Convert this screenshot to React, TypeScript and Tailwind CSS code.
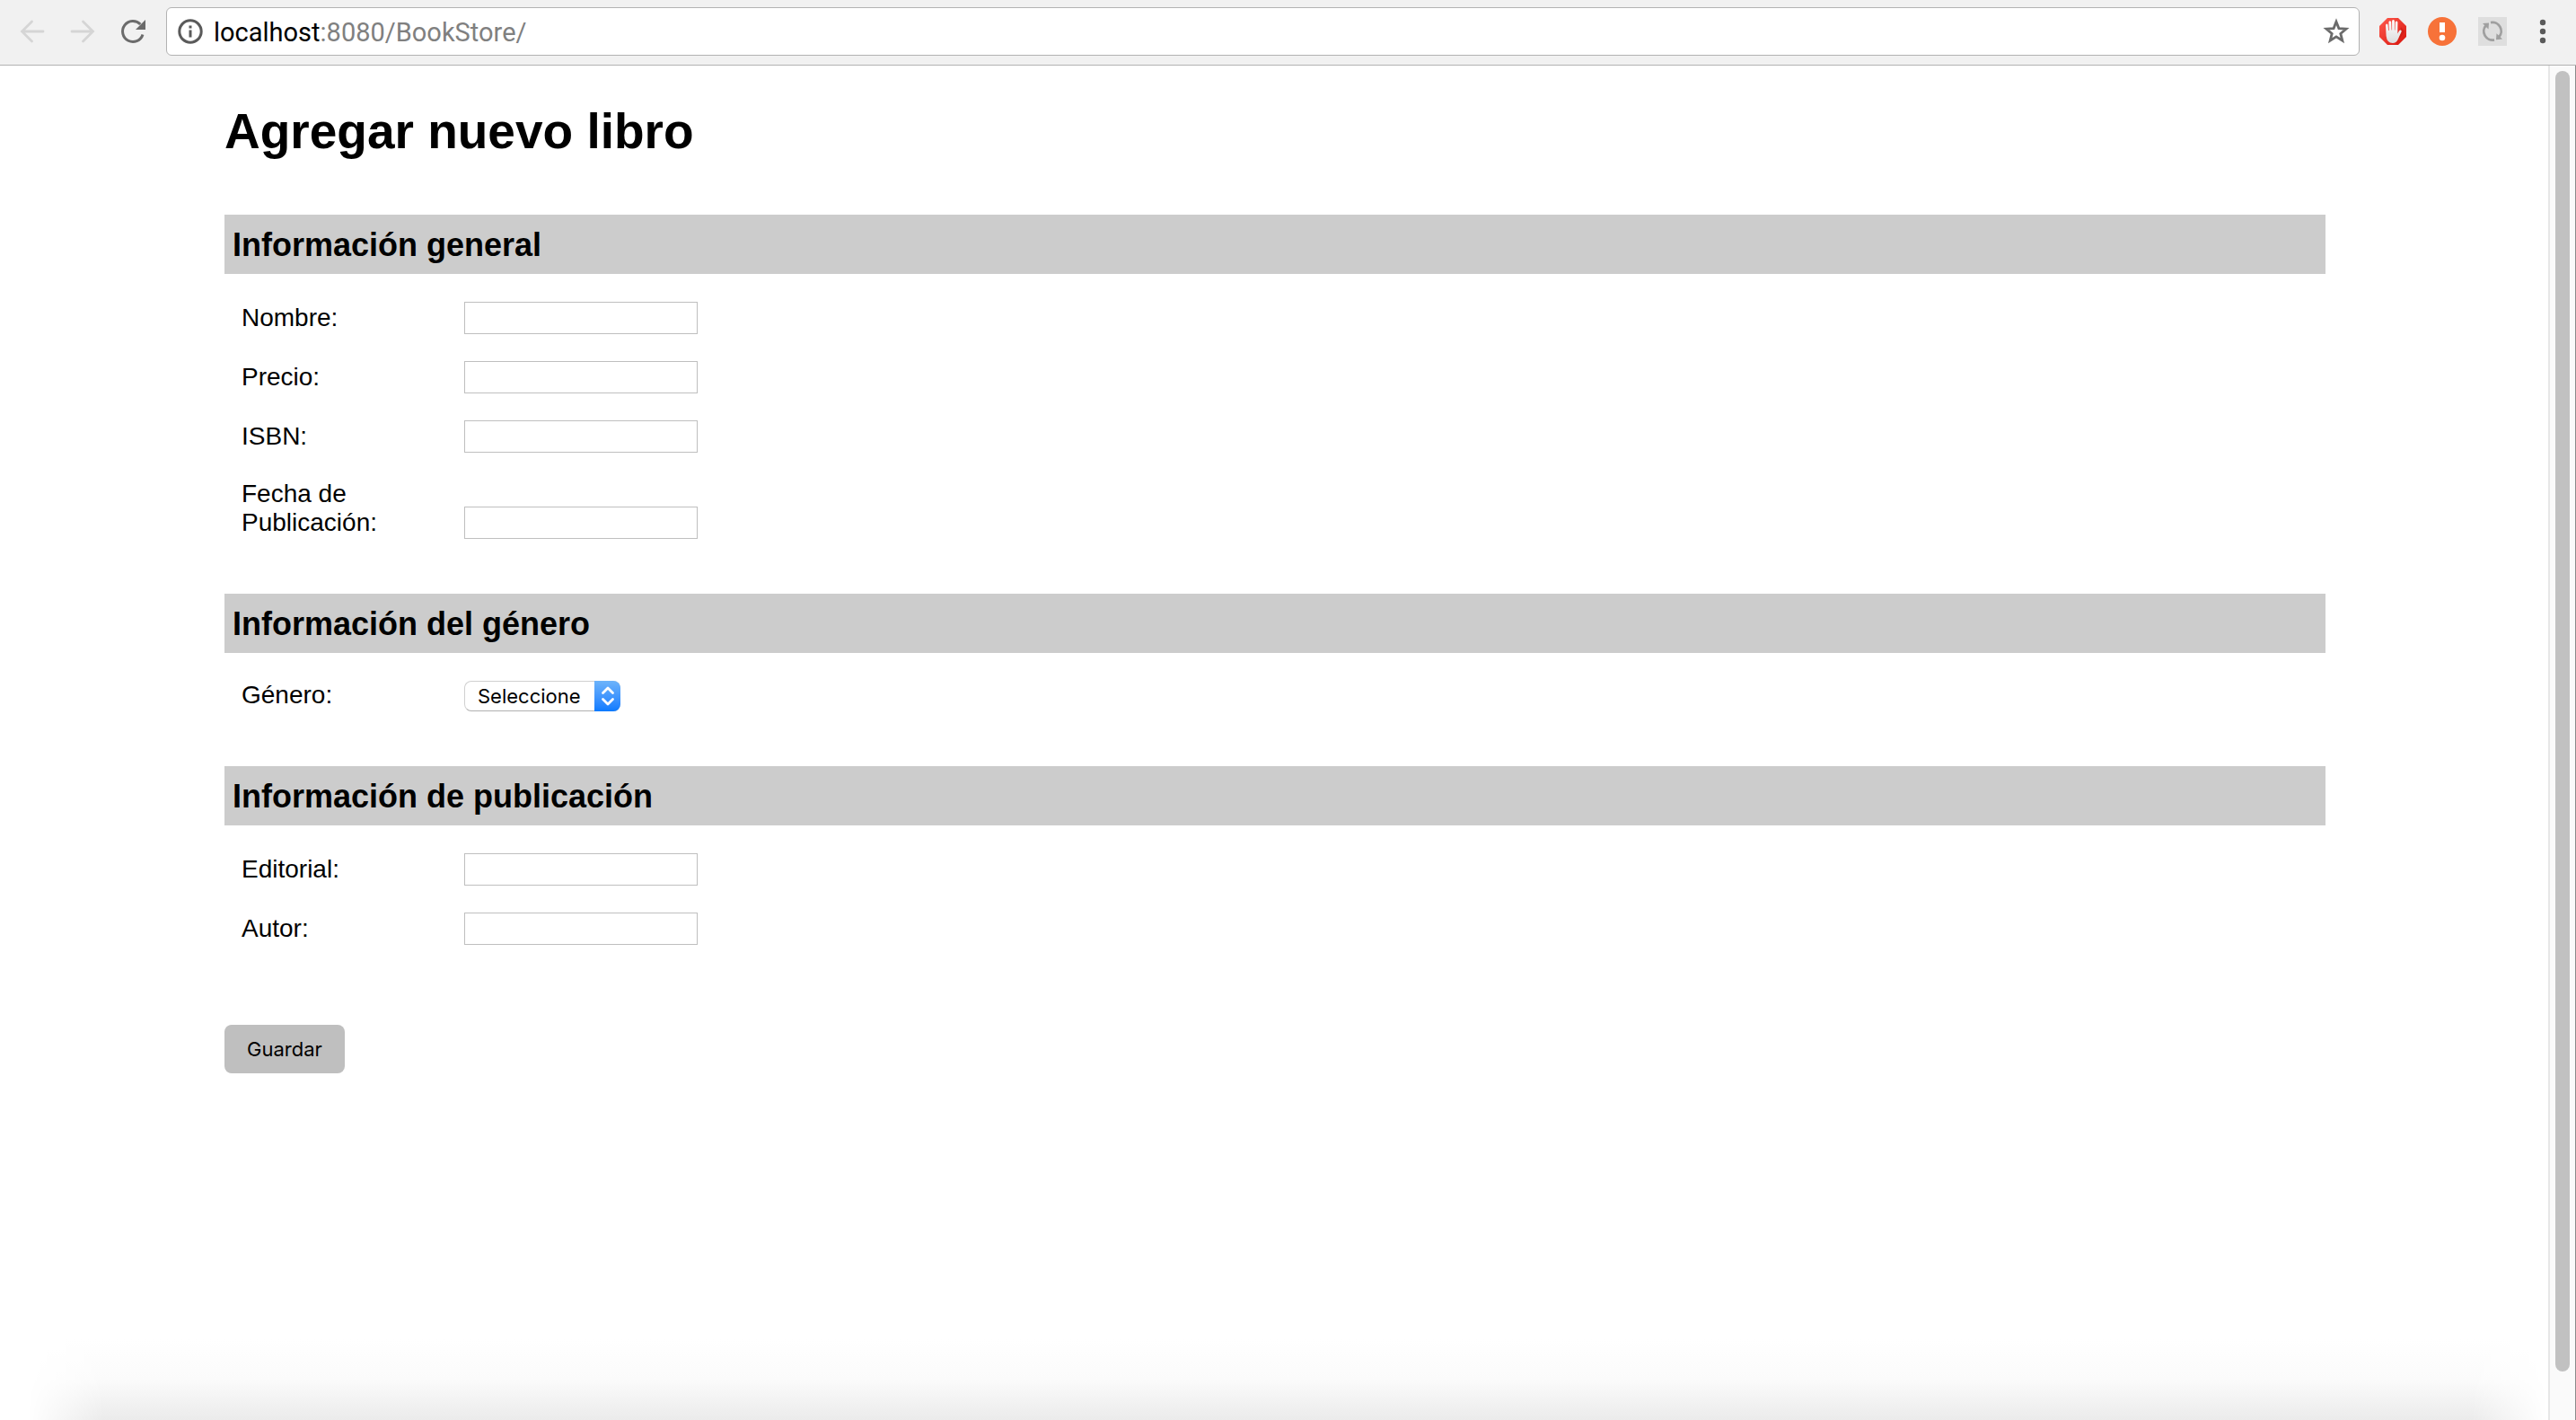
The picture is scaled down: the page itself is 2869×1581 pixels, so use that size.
import type { ReactNode } from "react";

const sans = "font-['Liberation_Sans',Arial,sans-serif]";

function ArrowIcon({ flip = false }: { flip?: boolean }) {
  return (
    <svg width="32" height="32" viewBox="0 0 32 32" fill="none" stroke="#d5d5d5" strokeWidth="2.8" strokeLinecap="round" className={flip ? "rotate-180" : ""}>
      <path d="M28 16H4.500M15.500 5L4.500 16L15.500 27" />
    </svg>
  );
}

function ReloadIcon() {
  return (
    <svg width="32" height="32" viewBox="0 0 32 32" fill="none">
      <path d="M27 19.500A11.500 11.500 0 1 1 24.300 8" stroke="#6b6b6b" strokeWidth="3" />
      <path d="M30 3V14H19Z" fill="#6b6b6b" />
    </svg>
  );
}

function InfoIcon() {
  return (
    <svg width="28" height="28" viewBox="0 0 28 28" fill="none" className="shrink-0">
      <circle cx="14" cy="14" r="12.200" stroke="#5a5a5a" strokeWidth="3" />
      <path d="M12.500 12.500h3v8h-3zM12.500 7.500h3v3h-3z" fill="#5a5a5a" />
    </svg>
  );
}

function StarIcon() {
  return (
    <svg width="30" height="30" viewBox="0 0 30 30" fill="none">
      <path d="M15 4.200L17.900 11.600L26 12.200L19.800 17.400L21.800 25.200L15 20.900L8.200 25.200L10.200 17.400L4 12.200L12.100 11.600Z" stroke="#6b6b6b" strokeWidth="2.800" />
    </svg>
  );
}

function BlockIcon() {
  return (
    <svg width="30" height="30" viewBox="0 0 30 30">
      <defs>
        <linearGradient id="red" x1="0" y1="0" x2="1" y2="1">
          <stop offset="0" stopColor="#ff5a4e" />
          <stop offset="1" stopColor="#d8140c" />
        </linearGradient>
        <linearGradient id="hand" x1="0" y1="0" x2="0" y2="1">
          <stop offset="0" stopColor="#ffffff" />
          <stop offset="1" stopColor="#dcdcdc" />
        </linearGradient>
      </defs>
      <path d="M9 0H21L30 9V21L21 30H9L0 21V9Z" fill="url(#red)" />
      <path d="M15 28L20 27L28 15L24 10L21 27Z" fill="#b30f0a" opacity=".35" />
      <path d="M7 8.200Q7 6.600 8.300 6.600T9.600 8.200L10.200 14H10.800L10.400 4.800Q10.400 3.200 11.800 3.200T13.200 4.800L13.600 13.500H14.100V3.600Q14.100 2 15.500 2T16.900 3.600V13.500H17.400L17.700 5Q17.800 3.500 19.100 3.500T20.400 5L20.300 17.500L22 14.500Q23 13 24.200 13.700Q25 14.300 24.500 15.500L20.600 24Q18.800 28 14.800 28Q8.500 28 7.600 20Z" fill="url(#hand)" />
    </svg>
  );
}

function AlertIcon() {
  return (
    <svg width="32" height="32" viewBox="0 0 32 32">
      <circle cx="16" cy="16" r="16" fill="#f77239" />
      <path d="M13 6h6v11h-6z" fill="#fff" />
      <circle cx="16" cy="23" r="3.300" fill="#fff" />
    </svg>
  );
}

function SyncIcon() {
  return (
    <svg width="32" height="32" viewBox="0 0 32 32" fill="none">
      <path d="M0 0H32V32H0Z" fill="#dedede" />
      <path d="M14 6.200A9.700 9.700 0 0 1 23.200 22.200M18 25.300A9.700 9.700 0 0 1 8.800 9.300" stroke="#9f9f9f" strokeWidth="2.800" />
      <path d="M5 7L12 6.500L11.500 13.500ZM27 24.500L20 25.300L20.500 18.200Z" fill="#9f9f9f" />
    </svg>
  );
}

function MenuIcon() {
  return (
    <svg width="8" height="28" viewBox="0 0 8 28" fill="#5a5a5a">
      <circle cx="4" cy="4" r="3.200" />
      <circle cx="4" cy="14" r="3.200" />
      <circle cx="4" cy="24" r="3.200" />
    </svg>
  );
}

function IconButton({ label, children }: { label: string; children: ReactNode }) {
  return (
    <button type="button" aria-label={label} className="flex shrink-0 items-center justify-center">
      {children}
    </button>
  );
}

function Toolbar() {
  return (
    <header className="flex h-[73px] shrink-0 items-start border-b border-[#b2b2b2] bg-[#f1f1f1] pt-2 pr-[33px] pl-5">
      <nav className="flex h-[54px] items-center gap-6 pr-[21px]">
        <IconButton label="Atrás"><ArrowIcon /></IconButton>
        <IconButton label="Adelante"><ArrowIcon flip /></IconButton>
        <IconButton label="Recargar"><ReloadIcon /></IconButton>
      </nav>
      <div className="flex h-[54px] flex-1 items-center rounded-md border border-[#b2b2b2] bg-white pr-2.5 pl-3">
        <InfoIcon />
        <a href="#" className="flex-1 pt-0.5 pl-3 font-[Roboto,sans-serif] text-[29px] leading-8 text-[#808080]">
          <span className="text-black">localhost</span>:8080/BookStore/
        </a>
        <IconButton label="Favorito"><StarIcon /></IconButton>
      </div>
      <div className="flex h-[54px] items-center gap-6 pl-[22px]">
        <IconButton label="Bloqueador"><BlockIcon /></IconButton>
        <IconButton label="Alertas"><AlertIcon /></IconButton>
        <IconButton label="Sincronizar"><SyncIcon /></IconButton>
      </div>
      <div className="flex h-[54px] items-center pl-9">
        <IconButton label="Menú"><MenuIcon /></IconButton>
      </div>
    </header>
  );
}

function Section({ title, children }: { title: string; children: ReactNode }) {
  return (
    <section className="mb-11">
      <h2 className="mb-[18px] bg-[#ccc] px-[9px] pt-[13px] pb-[11px] text-[36px] leading-[42px] font-bold">{title}</h2>
      <div className="flex flex-col pl-[19px]">{children}</div>
    </section>
  );
}

function Row({ id, label, children }: { id: string; label: string; children: ReactNode }) {
  return (
    <div className="flex items-end gap-12 pt-[13px] pb-[17px]">
      <label htmlFor={id} className="w-[200px] pb-0.5 text-[28px] leading-8">{label}</label>
      {children}
    </div>
  );
}

function TextField({ id, label }: { id: string; label: string }) {
  return (
    <Row id={id} label={label}>
      <input id={id} type="text" className="h-9 w-[260px] border border-[#bfbfbf] bg-white px-1 text-[22px] outline-none" />
    </Row>
  );
}

function GenreSelect() {
  return (
    <div className="relative flex">
      <select
        id="genero"
        className="h-[34px] w-[174px] appearance-none rounded-lg border border-[#d0d0d0] border-b-[#b0b0b0] bg-white pl-3.5 font-[Inter,sans-serif] text-[22px] leading-[30px] text-black outline-none"
      >
        <option>Seleccione</option>
      </select>
      <span className="pointer-events-none absolute top-0 right-0 flex h-[34px] w-[29px] items-center justify-center rounded-r-lg bg-linear-to-b from-[#6cb3fa] to-[#087aff]">
        <svg width="16" height="24" viewBox="0 0 16 24" fill="none" stroke="#fff" strokeWidth="2.800" strokeLinecap="round" strokeLinejoin="round">
          <path d="M2.500 8.500L8 3L13.500 8.500M2.500 15.500L8 21L13.500 15.500" />
        </svg>
      </span>
    </div>
  );
}

export default function App() {
  return (
    <div className={`flex min-h-screen flex-col bg-white text-black ${sans}`}>
      <Toolbar />
      <div className="flex flex-1">
        <main className="flex flex-1 flex-col justify-between pl-0.5">
          <form className="mx-auto w-full max-w-[2340px]" onSubmit={(e) => e.preventDefault()}>
            <h1 className="pt-[41px] pb-[61px] text-[55px] leading-[64px] font-bold">Agregar nuevo libro</h1>
            <Section title="Información general">
              <TextField id="nombre" label="Nombre:" />
              <TextField id="precio" label="Precio:" />
              <TextField id="isbn" label="ISBN:" />
              <TextField id="fecha" label="Fecha de Publicación:" />
            </Section>
            <Section title="Información del género">
              <Row id="genero" label="Género:">
                <GenreSelect />
              </Row>
            </Section>
            <Section title="Información de publicación">
              <TextField id="editorial" label="Editorial:" />
              <TextField id="autor" label="Autor:" />
            </Section>
            <button type="submit" className="mt-7 h-[54px] w-[134px] rounded-lg bg-[#bfbfbf] font-[Inter,sans-serif] text-[22px] leading-7">
              Guardar
            </button>
          </form>
          <div className="h-[90px] bg-linear-to-b from-white via-[#fbfbfb] to-[#ebebeb] mask-[linear-gradient(to_right,transparent_1%,black_4%,black_97%,transparent)]" />
        </main>
        <aside className="flex w-[31px] flex-col border-r border-l-2 border-r-[#8a8a8a] border-l-[#e7e7e7] bg-[#fafafa] px-1.5 pt-1.5 pb-[54px]">
          <div className="w-4 flex-1 rounded-full bg-[#c1c1c1]" />
        </aside>
      </div>
    </div>
  );
}
